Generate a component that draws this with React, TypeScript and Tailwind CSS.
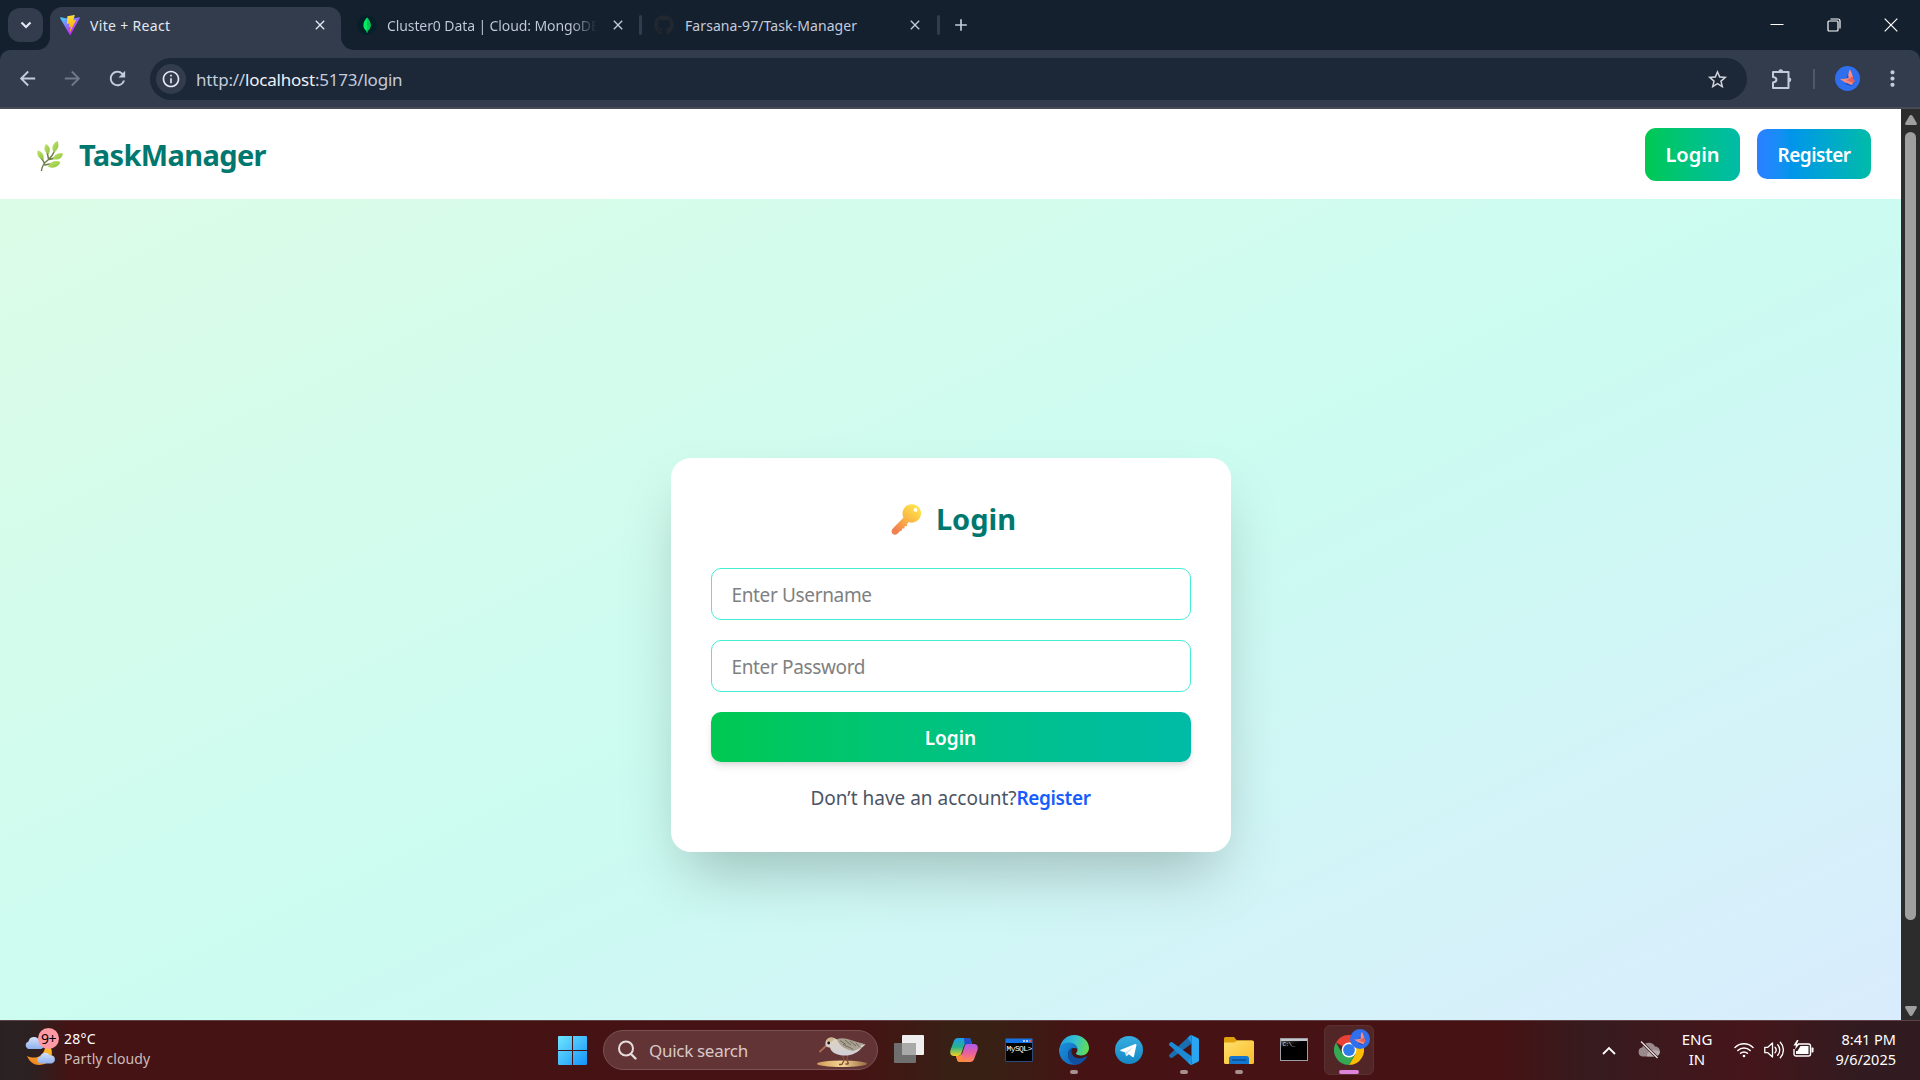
import type { ReactNode } from 'react';
import {
  MdAdd,
  MdArrowBack,
  MdArrowForward,
  MdClose,
  MdInfoOutline,
  MdMoreVert,
  MdRefresh,
  MdStarBorder,
} from 'react-icons/md';
import { FaGithub } from 'react-icons/fa';

/* ---------- browser icons ---------- */

function ViteLogo() {
  return (
    <svg viewBox="0 0 256 257" className="size-5 shrink-0">
      <defs>
        <linearGradient id="viteA" x1="-1%" x2="58%" y1="8%" y2="78%">
          <stop offset="0" stopColor="#41D1FF" />
          <stop offset="1" stopColor="#BD34FE" />
        </linearGradient>
        <linearGradient id="viteB" x1="43%" x2="50%" y1="2%" y2="89%">
          <stop offset="0" stopColor="#FFEA83" />
          <stop offset=".08" stopColor="#FFDD35" />
          <stop offset="1" stopColor="#FFA800" />
        </linearGradient>
      </defs>
      <path fill="url(#viteA)" d="M255.153 37.938L134.897 252.976c-2.483 4.44-8.862 4.466-11.382.048L.875 37.958c-2.746-4.814 1.371-10.646 6.827-9.67l120.385 21.517a6.537 6.537 0 0 0 2.322-.004l117.867-21.483c5.438-.991 9.574 4.796 6.877 9.62Z" />
      <path fill="url(#viteB)" d="M185.432.063L96.44 17.501a3.268 3.268 0 0 0-2.634 3.014l-5.474 92.456a3.268 3.268 0 0 0 3.997 3.378l24.777-5.718c2.318-.535 4.413 1.507 3.936 3.838l-7.361 36.047c-.495 2.426 1.782 4.5 4.151 3.78l15.304-4.649c2.372-.72 4.652 1.36 4.15 3.788l-11.698 56.621c-.732 3.542 3.979 5.473 5.943 2.437l1.313-2.028l72.516-144.72c1.215-2.423-.88-5.186-3.54-4.672l-25.505 4.922c-2.396.462-4.435-1.77-3.759-4.114l16.646-57.705c.677-2.35-1.37-4.583-3.769-4.113Z" />
    </svg>
  );
}

function MongoLogo() {
  return (
    <svg viewBox="0 0 20 20" className="size-5 shrink-0">
      <circle cx="10" cy="10" r="10" fill="#06202a" />
      <path d="M10 2.6C11.5 4.6 13.6 6.6 13.6 10.2c0 2.8-1.5 4.6-3 5.6L10.4 17.6h-.8L9.4 15.8c-1.5-1-3-2.8-3-5.6C6.400 6.6 8.500 4.600 10 2.600Z" fill="#00ed64" />
      <path d="M10 2.600C11.500 4.600 13.600 6.600 13.600 10.200c0 2.800-1.500 4.600-3 5.600L10.400 17.600H10Z" fill="#00c853" />
    </svg>
  );
}

function PuzzleIcon() {
  return (
    <svg viewBox="0 0 24 24" className="size-6" fill="none" stroke="#c3cbdc" strokeWidth="2" strokeLinejoin="round">
      <path d="M3 5h15.500v16H3v-5.500c2.300-.3 3.400-1.400 3.400-2.700S5.300 10.300 3 10z" />
      <path d="M8.500 4.500a2.300 2.300 0 0 1 4.600 0zM19 10.500a2.300 2.300 0 0 1 0 4.600z" fill="#c3cbdc" stroke="none" />
    </svg>
  );
}

function AvatarBird({ className }: { className: string }) {
  return (
    <svg viewBox="0 0 26 26" className={className}>
      <circle cx="13" cy="13" r="13" fill="#2f6fed" />
      <path d="M11 19l6.500 2L20 17l-1-5-6-3z" fill="#1d4fc0" />
      <path d="M15.500 3.500c2 4 3.400 7.500 3.400 11.500l-5-3.500c-.3-3 .5-5.500 1.600-8z" fill="#ff8a80" />
      <path d="M5 13.200c4 .8 7.500 .3 10-1.700l4.500 5-2 3.500c-3.500-2-8.500-3-12.500-6.800z" fill="#f28b82" />
      <path d="M12 15l6-4 2.800 5-2.300 1.500z" fill="#e5605a" />
    </svg>
  );
}

/* ---------- page illustrations ---------- */

function HerbIcon() {
  return (
    <svg viewBox="0 0 26 30" className="mt-[3px] h-[30px] w-[26px] shrink-0">
      <defs>
        <linearGradient id="leaf" x1="0" x2="1" y1="0" y2="1">
          <stop offset="0" stopColor="#c0e56c" />
          <stop offset="1" stopColor="#8fc13f" />
        </linearGradient>
      </defs>
      <path d="M4.500 29.500C5 25 7.500 21.500 11 19c3-2.500 5-5 6.500-9M7.500 22.500C6.500 20 5.500 18.500 3.500 16.500M11.500 18C11 15 10.500 13 10 11M8 24c3-1 5-1 8-1M12 18.500c3-.5 5.500-1.500 8-2.500" fill="none" stroke="#6a7f45" strokeWidth="1.500" strokeLinecap="round" />
      <g fill="url(#leaf)">
        <path d="M.8 9.300c4.200 1.500 6.400 4.700 5.900 9.200C1.700 17.700-.9 13.800.8 9.300z" />
        <path d="M9 3c4 2.200 4.800 6.200 2.600 10.300C7 11 6.300 7 9 3z" />
        <path d="M20.500 0c2 4.500.7 8.700-3.800 11.500C14 7 15.500 2.500 20.500 0z" />
        <path d="M26 12.500c-.6 4.700-4.800 7-10.200 5.700 1.200-4.700 5.500-7 10.200-5.700z" />
        <path d="M23.500 21c-2.200 5.300-7 7-12.500 4.700 2-5 7.200-6.900 12.500-4.700z" />
      </g>
    </svg>
  );
}

function KeyIcon() {
  return (
    <svg viewBox="0 0 32 32" className="size-8 shrink-0">
      <defs>
        <linearGradient id="key" x1="24" x2="6" y1="4" y2="28" gradientUnits="userSpaceOnUse">
          <stop offset="0" stopColor="#ffdf4a" />
          <stop offset=".45" stopColor="#fbb745" />
          <stop offset="1" stopColor="#f08050" />
        </linearGradient>
      </defs>
      <path fillRule="evenodd" fill="url(#key)" d="M22 1.200a9.200 9.200 0 1 1-3.200 17.900l-1.600 1.700-.2 2.200-2.300.2-.3 2.200-2.300.2-.3 2.100-1.700.3-2.400 2.500c-1.600 1.600-3.900 1.600-5.200.3s-1.300-3.600.3-5.200L13.500 14.500A9.200 9.200 0 0 1 22 1.200zM25.500 5a1.900 1.900 0 1 0 0 3.800 1.900 1.900 0 0 0 0-3.800z" />
    </svg>
  );
}

/* ---------- taskbar icons ---------- */

function WeatherIcon() {
  return (
    <svg viewBox="0 0 36 38" className="h-[38px] w-9 shrink-0">
      <defs>
        <linearGradient id="cloud" x1="0" x2="0" y1="0" y2="1">
          <stop offset="0" stopColor="#d3e2fb" />
          <stop offset="1" stopColor="#8fb0ee" />
        </linearGradient>
        <linearGradient id="moon" x1="0" x2="1" y1="1" y2="0">
          <stop offset="0" stopColor="#ee7a1c" />
          <stop offset="1" stopColor="#ffc02e" />
        </linearGradient>
      </defs>
      <path d="M27 18c3 8-1.500 17-12 17-5 0-9.500-3-12-9 8 3.500 16 1.500 18-8z" fill="url(#moon)" />
      <path d="M4 19a4 4 0 0 1 .5-7.500A5.500 5.500 0 0 1 15 10.500a4.300 4.300 0 0 1 2 8.500z" fill="url(#cloud)" />
      <path d="M16 33.500a3.600 3.600 0 0 1 .4-7 5 5 0 0 1 9.300-1.200 4 4 0 0 1 2 8.200z" fill="url(#cloud)" />
    </svg>
  );
}

function WindowsLogo() {
  return (
    <svg viewBox="0 0 29 29" className="size-[29px]">
      <defs>
        <linearGradient id="win" x1="0" x2="29" y1="0" y2="29" gradientUnits="userSpaceOnUse">
          <stop offset="0" stopColor="#6fe6ff" />
          <stop offset="1" stopColor="#1592fb" />
        </linearGradient>
      </defs>
      <path fill="url(#win)" d="M1 0h13v14H0V1a1 1 0 0 1 1-1zM15 0h13a1 1 0 0 1 1 1v13H15zM0 15h14v14H1a1 1 0 0 1-1-1zM15 15h14v13a1 1 0 0 1-1 1H15z" />
    </svg>
  );
}

function SearchGlyph() {
  return (
    <svg viewBox="0 0 20 20" className="-ml-px size-5 shrink-0" fill="none" stroke="#e6dcdc" strokeWidth="2" strokeLinecap="round">
      <circle cx="9" cy="8.500" r="7" />
      <path d="M14 14l4.500 4.500" strokeWidth="2.400" />
    </svg>
  );
}

function Sandpiper() {
  return (
    <svg viewBox="0 0 50 30" className="mt-[3px] h-[30px] w-[50px] shrink-0">
      <defs>
        <linearGradient id="sand" x1="0" x2="1" y1="0" y2="0">
          <stop offset="0" stopColor="#cf9a55" />
          <stop offset=".5" stopColor="#f3d795" />
          <stop offset="1" stopColor="#9a6b41" />
        </linearGradient>
        <linearGradient id="belly" x1="0" x2="0" y1="0" y2="1">
          <stop offset="0" stopColor="#ded3bd" />
          <stop offset="1" stopColor="#cfcfd8" />
        </linearGradient>
      </defs>
      <ellipse cx="25" cy="26.800" rx="25" ry="3.200" fill="url(#sand)" />
      <path d="M25.500 18l1.500 5-2 4.500M31 17l-1 6 1.500 4M25 27.500h-3M31.500 27h-3" fill="none" stroke="#8a4b35" strokeWidth="1.300" />
      <path d="M10 8L3 14.500" stroke="#a86b52" strokeWidth="2" strokeLinecap="round" />
      <path d="M8.500 6c.5-4 3-5.500 6-5.500 3.500 0 5 2 7 3 8-1 13 0 27 4l-4 3.500c-4 5-11 8-18 7.500C18 18 13.500 14 13 10.500 10 10.500 8 9 8.500 6z" fill="url(#belly)" />
      <path d="M20 2c8-2.500 14 1.500 28.500 5.500l-5 1 1 2-8 3.500C29 13 22 9 20 2z" fill="#aaa192" />
      <path d="M23 3.500l6 4M28 3l6 5M33 4l6 5M30 9l6 3.500M26 7l4 3M39 6l3 3.500" stroke="#6b6452" strokeWidth=".9" />
      <path d="M9 4c2-4 6-4 9-2l-4 3z" fill="#d0b68b" />
      <circle cx="11.700" cy="6" r="1.400" fill="#1d1514" />
    </svg>
  );
}

function TaskViewIcon() {
  return (
    <svg viewBox="0 0 30 28" className="-mt-[2px] h-7 w-[30px]">
      <rect x="8" y="0" width="22" height="20" rx="1" fill="#eeeeee" />
      <rect x="0" y="8" width="22" height="20" rx="1" fill="#6f6f6f" />
      <path d="M8 8h14v12H8z" fill="#a9a9a9" />
    </svg>
  );
}

function CopilotIcon() {
  return (
    <svg viewBox="0 0 28 26" className="-mt-px h-[26px] w-7">
      <defs>
        <linearGradient id="copA" x1="0" x2="0" y1="0" y2="1">
          <stop offset="0" stopColor="#1f9be8" />
          <stop offset=".5" stopColor="#25b38e" />
          <stop offset="1" stopColor="#f6d21f" />
        </linearGradient>
        <linearGradient id="copB" x1="0" x2="0" y1="0" y2="1">
          <stop offset="0" stopColor="#a95cf0" />
          <stop offset=".5" stopColor="#ea5f9d" />
          <stop offset="1" stopColor="#ff8a4c" />
        </linearGradient>
      </defs>
      <path d="M8 1h10c2 0 2.600 1 3.200 3l.8 3h-5c-2 0-3 1-3.500 3l-2 6c-.7 2-1.500 3-4 3H4c-3 0-4.500-2-3.500-6L3.500 5C4.300 2.300 5.500 1 8 1z" fill="url(#copA)" />
      <path d="M20 25H10c-2 0-2.600-1-3.200-3L6 19h2c3 0 4-1.500 4.500-3.500l2-6C15 7.500 16 7 18 7h6c3 0 4.500 2 3.500 6l-3 8c-.8 2.700-2 4-4.500 4z" fill="url(#copB)" />
      <path d="M14 1h4c2 0 2.600 1 3.200 3L22 7h-5c-1 0-1.800.3-2.400.9z" fill="#2150c8" />
      <path d="M6 19h2c2 0 3.200-.7 3.900-2L13 25h-3c-2 0-2.600-1-3.200-3z" fill="#fb8a3c" />
    </svg>
  );
}

function MySqlIcon() {
  return (
    <div className="-mt-px flex h-6 w-7 flex-col overflow-hidden rounded-[1px] border border-[#2b4a7c] bg-black">
      <div className="flex h-[4px] shrink-0 items-center justify-end gap-px bg-[#1673e6] pr-px">
        <span className="size-[2px] bg-[#a8ceff]" />
        <span className="size-[2px] bg-[#a8ceff]" />
        <span className="size-[2px] bg-[#ef5b4c]" />
      </div>
      <span className="pl-px font-['Liberation_Mono',monospace] text-[8px] leading-[11px] tracking-[-0.6px] whitespace-nowrap text-white">
        MySQL&gt;
      </span>
    </div>
  );
}

function EdgeIcon() {
  return (
    <svg viewBox="0 0 30 30" className="size-[30px]">
      <defs>
        <linearGradient id="edgeTop" x1="0" x2="1" y1=".3" y2=".5">
          <stop offset="0" stopColor="#1f9fe0" />
          <stop offset=".5" stopColor="#35c1d0" />
          <stop offset="1" stopColor="#62dd50" />
        </linearGradient>
        <linearGradient id="edgeLow" x1="0" x2="1" y1="0" y2="1">
          <stop offset="0" stopColor="#1a94dd" />
          <stop offset="1" stopColor="#0f62b5" />
        </linearGradient>
      </defs>
      <path d="M1 12C2.300 5 8 0 15 0c8.500 0 15 6 15 13 0 4.500-3.500 7.500-7.500 7.500-3.500 0-5.700-1.300-5.500-2.300.2-.8 1.500-1.200 1.500-3.700 0-3-3-6-7.500-6C6.500 8.500 3 10 1 12z" fill="url(#edgeTop)" />
      <path d="M0 15C0 10.500 4.500 7.500 10 7.500c5 0 8.500 3 8.500 7C16 11.500 9 13 9 19.500c0 5 4 9 9 10C8 31.500 0 24.500 0 15z" fill="url(#edgeLow)" />
      <path d="M9 19.500c0-4 2.500-6.500 5-7-1.500 2-2 4-1 6.500 2 4.700 8.500 5.500 14 2.500.8-.4 1.200.2.800.8C25 27 20.500 29.800 17 29.700 12 29 9 24.500 9 19.500z" fill="#10509f" />
    </svg>
  );
}

function TelegramIcon() {
  return (
    <svg viewBox="0 0 28 28" className="-mt-px size-7">
      <defs>
        <linearGradient id="tg" x1="0" x2="0" y1="0" y2="1">
          <stop offset="0" stopColor="#37aee2" />
          <stop offset="1" stopColor="#1587c4" />
        </linearGradient>
      </defs>
      <circle cx="14" cy="14" r="14" fill="url(#tg)" />
      <path d="M5.800 13.700l14.400-5.700c.8-.3 1.400.2 1.200 1.200L19 20.300c-.2.900-.7 1.100-1.500.6l-3.700-2.700-1.900 1.800c-.4.400-.9.200-.9-.3l-.6-3.300-4.500-1.400c-.8-.3-.8-1-.1-1.300z" fill="#fff" />
      <path d="M10.400 16.400l8.300-5.700-6.200 6.300-.6 3-1.100-.6z" fill="#c8daea" />
    </svg>
  );
}

function VsCodeIcon() {
  return (
    <svg viewBox="0 0 100 100" className="size-[30px]">
      <path d="M71 1L76 28 11 76q-3 2-6 0L1 72q-2-3 0-6z" fill="#1a6fb3" />
      <path d="M71 99L76 72 11 24q-3-2-6 0L1 28q-2 3 0 6z" fill="#1c8ad4" />
      <path d="M71 1q2-2 5 0L97 11q3 2 3 5V84q0 3-3 5L76 99q-3 2-5 0 3 0 4-4V5q-1-4-4-4z" fill="#2aa5f2" />
      <path d="M71 1C73 2 75 3 75 6V94c0 3-2 4-4 5L62 90 75 73V27L62 10z" fill="#2297e4" />
    </svg>
  );
}

function FolderIcon() {
  return (
    <svg viewBox="0 0 30 27" className="h-[27px] w-[30px]">
      <defs>
        <linearGradient id="fold" x1="0" x2="1" y1="0" y2="1">
          <stop offset="0" stopColor="#ffdf6c" />
          <stop offset="1" stopColor="#f9bd2a" />
        </linearGradient>
      </defs>
      <path d="M0 1.500A1.500 1.500 0 0 1 1.500 0H10l3 3.500H28V9H0z" fill="#e0a10c" />
      <path d="M0 5.500h10.500L13 3.500h15.500A1.500 1.500 0 0 1 30 5v20.500a1.500 1.500 0 0 1-1.500 1.500h-27A1.500 1.500 0 0 1 0 25.500z" fill="url(#fold)" />
      <path d="M5 27v-5.500A2.500 2.500 0 0 1 7.500 19h15a2.500 2.500 0 0 1 2.500 2.500V27z" fill="#1377d2" />
      <path d="M8.500 23h13" stroke="#0b4c92" strokeWidth="1.300" strokeLinecap="round" />
    </svg>
  );
}

function TerminalIcon() {
  return (
    <div className="-mt-[2px] flex h-[23px] w-7 flex-col border border-[#9b9fa4] bg-black">
      <div className="h-[2px] shrink-0 bg-[#c4c7cb]" />
      <span className="bg-gradient-to-br from-[#555] to-black to-60% pl-[2px] font-['Liberation_Mono',monospace] text-[6px] leading-[8px] tracking-[-0.6px] whitespace-nowrap text-[#dddddd]">
        C:\_
      </span>
    </div>
  );
}

function ChromeIcon() {
  return (
    <svg viewBox="0 0 30 30" className="size-[30px]">
      <path d="M15 15L2 7.500A15 15 0 0 1 28 7.500z" fill="#ea4335" />
      <path d="M15 15V7.500h13A15 15 0 0 1 15 30l6.500-11.200z" fill="#fbbc05" />
      <path d="M15 15l6.500 3.800L15 30A15 15 0 0 1 2 7.500l6.500 11.300z" fill="#34a853" />
      <circle cx="15" cy="15" r="7.400" fill="#fff" />
      <circle cx="15" cy="15" r="5.900" fill="#2f7bea" />
    </svg>
  );
}

function CloudOffIcon() {
  return (
    <svg viewBox="0 0 22 18" className="h-[18px] w-[22px]">
      <path d="M5 15.500a4.500 4.500 0 0 1-.8-8.900A7 7 0 0 1 17 5.500a5 5 0 0 1 0 10z" fill="#9b8a8d" />
      <path d="M9 15.500C9 10 13 8 21.500 10c.5 3-1.500 5.500-4.500 5.500z" fill="#b8abad" />
      <path d="M3 .5L19.500 17" stroke="#3a1a1e" strokeWidth="2.800" />
      <path d="M3 .5L19.500 17" stroke="#efe8e8" strokeWidth="1.300" />
    </svg>
  );
}

function WifiIcon() {
  return (
    <svg viewBox="0 0 20 16" className="h-4 w-5" fill="none" stroke="#fff" strokeWidth="1.500" strokeLinecap="round">
      <path d="M1 5.500a12.800 12.800 0 0 1 18 0M3.800 8.500a8.800 8.800 0 0 1 12.400 0M6.600 11.300a4.800 4.800 0 0 1 6.800 0" />
      <circle cx="10" cy="14" r="1.300" fill="#fff" stroke="none" />
    </svg>
  );
}

function VolumeIcon() {
  return (
    <svg viewBox="0 0 20 18" className="h-[18px] w-5" fill="none" stroke="#fff" strokeWidth="1.300" strokeLinecap="round" strokeLinejoin="round">
      <path d="M.8 6.300h3L8.500 2v14L3.800 11.700h-3z" />
      <path d="M11 6.300a4 4 0 0 1 0 5.400M13.700 3.800a7.600 7.600 0 0 1 0 10.400M16.300 1.300a11.200 11.200 0 0 1 0 15.400" />
    </svg>
  );
}

function BatteryIcon() {
  return (
    <svg viewBox="0 0 21 18" className="-mt-[2px] h-[18px] w-[21px]">
      <path d="M5 4h10.500a2 2 0 0 1 2 2v8a2 2 0 0 1-2 2H3a2 2 0 0 1-2-2V9" fill="none" stroke="#fff" strokeWidth="1.400" />
      <path d="M7.500 6H15.500v8H3v-3h1.500z" fill="#fff" />
      <path d="M18.500 7.500h1.300a.7.700 0 0 1 .7.700v3.600a.7.700 0 0 1-.7.700h-1.300z" fill="#fff" />
      <path d="M4 0L.5 5.500H3L2 9.500 6.500 4H4L5.500 0z" fill="#fff" />
    </svg>
  );
}

/* ---------- browser chrome ---------- */

function Separator() {
  return <span className="h-5 w-[3px] shrink-0 rounded-full bg-[#323c4c]" />;
}

function TabStrip() {
  return (
    <div className="flex h-[50px] bg-[#15202e] text-[14px] text-[#c3cbdc]">
      <button className="mt-2 ml-2 flex h-[34px] w-[35px] shrink-0 items-center justify-center rounded-[12px] bg-[#323c4c]">
        <svg viewBox="0 0 12 8" className="h-2 w-3" fill="none" stroke="#e3e8f2" strokeWidth="2.200">
          <path d="M1.500 1.500L6 6l4.500-4.500" />
        </svg>
      </button>

      <div className="relative mt-[7px] ml-[7px] flex h-[43px] w-[291px] shrink-0 items-start rounded-t-[12px] bg-[#323c4c] pr-[13px] pl-[10px] text-[#e3e8f2]">
        <svg viewBox="0 0 13 13" className="absolute bottom-0 -left-[13px] size-[13px]">
          <path d="M13 0v13H0A13 13 0 0 0 13 0z" fill="#323c4c" />
        </svg>
        <svg viewBox="0 0 13 13" className="absolute -right-[13px] bottom-0 size-[13px]">
          <path d="M0 0v13h13A13 13 0 0 1 0 0z" fill="#323c4c" />
        </svg>
        <div className="flex h-9 grow items-center">
          <ViteLogo />
          <span className="ml-[10px] grow tracking-[0.32px]">Vite + React</span>
          <MdClose className="size-4" />
        </div>
      </div>

      <div className="mt-[7px] flex h-9 w-[301px] shrink-0 items-center pl-4">
        <MongoLogo />
        <span className="ml-[10px] w-[210px] overflow-hidden bg-gradient-to-r from-[#c3cbdc] from-88% to-[#15202e] to-100% bg-clip-text tracking-[-0.1px] whitespace-nowrap text-transparent">
          Cluster0 Data | Cloud: MongoDB
        </span>
        <MdClose className="ml-[13px] size-4 shrink-0" />
        <span className="grow" />
        <Separator />
      </div>

      <div className="mt-[7px] flex h-9 w-[298px] shrink-0 items-center pl-3">
        <FaGithub className="size-5 shrink-0 text-[#22282f]" />
        <span className="ml-[11px] grow tracking-[0.08px] whitespace-nowrap">Farsana-97/Task-Manager</span>
        <MdClose className="mr-[14px] size-4 shrink-0" />
        <Separator />
      </div>

      <div className="mt-[7px] flex h-9 items-center pl-[11px]">
        <MdAdd className="size-5" />
      </div>

      <div className="ml-auto flex h-[49px] items-center gap-[43px] pr-[22px] text-white">
        <svg viewBox="0 0 14 14" className="size-[14px]" stroke="currentColor">
          <path d="M.5 6.500h13" />
        </svg>
        <svg viewBox="0 0 14 14" className="size-[14px]" fill="none" stroke="currentColor" strokeWidth="1.200">
          <rect x="1" y="3" width="10" height="10" rx="1" />
          <path d="M3.500 1H11a2 2 0 0 1 2 2v7.500" />
        </svg>
        <svg viewBox="0 0 14 14" className="size-[14px]" stroke="currentColor" strokeWidth="1.200">
          <path d="M.7.700l12.600 12.600M13.300.700L.7 13.300" />
        </svg>
      </div>
    </div>
  );
}

function Toolbar() {
  return (
    <div className="bg-[#15202e]">
      <div className="flex h-[59px] items-start rounded-t-[10px] border-b-2 border-[#464b56] bg-[#323c4c] pt-2 text-[#c3cbdc]">
        <div className="flex h-[41px] w-[150px] shrink-0 items-center gap-[22px] pl-4">
          <MdArrowBack className="size-[23px]" />
          <MdArrowForward className="size-[23px] text-[#6f7988]" />
          <MdRefresh className="size-[23px]" />
        </div>
        <div className="flex h-[42px] w-[1597px] shrink-0 items-center rounded-full bg-[#1c2737] pr-[18px] pl-[6px]">
          <span className="flex size-[30px] items-center justify-center rounded-full bg-[#323c4c]">
            <MdInfoOutline className="size-5 text-[#e3e8f2]" />
          </span>
          <span className="ml-[10px] grow pt-px text-[17px] tracking-[-0.21px]">
            http://<span className="text-[#eef1f8]">localhost</span>:5173/login
          </span>
          <MdStarBorder className="size-[23px] text-[#cfd2d8]" />
        </div>
        <div className="flex h-[41px] grow items-center">
          <span className="ml-[23px]">
            <PuzzleIcon />
          </span>
          <span className="ml-[19px] h-5 w-[2px] bg-[#4e5868]" />
          <AvatarBird className="ml-[20px] size-[25px]" />
          <MdMoreVert className="ml-[20px] size-[25px]" />
        </div>
      </div>
    </div>
  );
}

/* ---------- page ---------- */

function PageHeader() {
  return (
    <header className="flex h-[90px] shrink-0 items-center justify-between bg-white pr-[30px] pl-[37px]">
      <div className="flex items-center gap-4">
        <HerbIcon />
        <span className="pt-px text-[29px] leading-[40px] font-bold tracking-[-0.63px] text-teal-700">TaskManager</span>
      </div>
      <div className="flex items-center gap-[17px]">
        <button className="h-[53px] w-[95px] rounded-[11px] bg-gradient-to-r from-green-500 to-teal-500 pt-px text-[20px] font-semibold text-white">
          Login
        </button>
        <button className="h-[50px] w-[114px] rounded-[10px] bg-gradient-to-r from-blue-500 to-teal-500 pt-[2px] text-[19px] font-semibold tracking-[-0.48px] text-white">
          Register
        </button>
      </div>
    </header>
  );
}

const inputClass =
  'h-[52px] w-full rounded-[10px] border border-teal-300 px-5 pt-[3px] text-[19px] tracking-[-0.35px] outline-none placeholder:text-[#808080]';

function LoginCard() {
  return (
    <form className="flex w-[560px] flex-col rounded-[20px] bg-white p-10 shadow-[0_31px_62px_-15px_rgba(0,0,0,0.25)]">
      <h2 className="mb-[30px] flex h-10 items-center justify-center gap-[14px] pt-[2px] pl-[5px] text-[29px] font-bold text-teal-700">
        <KeyIcon />
        Login
      </h2>
      <div className="flex flex-col gap-5">
        <input className={inputClass} placeholder="Enter Username" />
        <input className={inputClass} placeholder="Enter Password" type="password" />
        <button
          type="button"
          className="h-[50px] rounded-[10px] bg-gradient-to-r from-green-500 to-teal-500 pt-[3px] text-[19px] font-semibold text-white shadow-[0_5px_8px_-1px_rgba(0,0,0,0.1),0_3px_5px_-2px_rgba(0,0,0,0.1)]"
        >
          Login
        </button>
        <p className="-mb-px pt-px text-center text-[19px] leading-[30px] text-gray-600">
          Don’t have an account?
          <a className="font-semibold tracking-[-0.38px] text-blue-600">Register</a>
        </p>
      </div>
    </form>
  );
}

function Scrollbar() {
  return (
    <div className="flex w-[19px] shrink-0 flex-col items-center bg-[#2c2c2c] pt-[6px] pb-1">
      <svg viewBox="0 0 12 10" className="h-[10px] w-3" fill="#9f9f9f">
        <path d="M6 0q1 0 1.600 1L11.700 8q.6 2-1 2H1.300q-1.600 0-1-2L4.400 1Q5 0 6 0z" />
      </svg>
      <div className="mt-[7px] h-[788px] w-[11px] rounded-full bg-[#9f9f9f]" />
      <span className="grow" />
      <svg viewBox="0 0 12 10" className="h-[10px] w-3" fill="#9f9f9f">
        <path d="M6 10q1 0 1.600-1L11.700 2q.6-2-1-2H1.300Q-.3 0 .3 2l4.100 7q.6 1 1.600 1z" />
      </svg>
    </div>
  );
}

/* ---------- taskbar ---------- */

function TaskCell({ children, open = false }: { children: ReactNode; open?: boolean }) {
  return (
    <div className="relative flex h-[60px] w-[55px] shrink-0 items-center justify-center">
      {children}
      {open && <span className="absolute bottom-[6px] h-1 w-2 rounded-full bg-[#a89090]" />}
    </div>
  );
}

function Taskbar() {
  return (
    <div className="flex h-[60px] items-center bg-[linear-gradient(90deg,#292223_0px,#2c2122_30px,#451313_70px,#461213_850px,#382015_950px,#382015_1000px,#461213_1080px,#461213_1500px,#361b1f_1590px,#45151a_1745px,#331b20_1850px,#301b20_1920px)] text-white shadow-[inset_0_1px_0_#5e4244]">
      <div className="flex w-[545px] shrink-0 items-center pb-[2px] pl-6">
        <div className="relative">
          <WeatherIcon />
          <span className="absolute -top-[2px] left-[14px] flex size-[21px] items-center justify-center rounded-full bg-[#ff99a4] text-[14px] leading-none tracking-[-0.5px] text-black">
            9+
          </span>
        </div>
        <div className="ml-1 text-[14px] leading-5">
          <div className="tracking-[0.25px]">28°C</div>
          <div className="tracking-[0.12px] text-[#cdbcbc]">Partly cloudy</div>
        </div>
      </div>

      <TaskCell>
        <WindowsLogo />
      </TaskCell>
      <div className="mx-[3px] flex h-10 w-[275px] shrink-0 items-center rounded-full border border-[#7b5152] bg-[#623435] pr-[10px] pl-[14px]">
        <SearchGlyph />
        <span className="ml-[12px] grow pt-px text-[17px] tracking-[-0.3px] text-[#d8c9c9]">Quick search</span>
        <Sandpiper />
      </div>
      <TaskCell>
        <TaskViewIcon />
      </TaskCell>
      <TaskCell>
        <CopilotIcon />
      </TaskCell>
      <TaskCell>
        <MySqlIcon />
      </TaskCell>
      <TaskCell open>
        <EdgeIcon />
      </TaskCell>
      <TaskCell>
        <TelegramIcon />
      </TaskCell>
      <TaskCell open>
        <VsCodeIcon />
      </TaskCell>
      <TaskCell open>
        <FolderIcon />
      </TaskCell>
      <TaskCell>
        <TerminalIcon />
      </TaskCell>
      <TaskCell>
        <div className="relative flex size-[50px] items-center justify-center rounded-[6px] border border-[#5c3030] bg-[#522527]">
          <ChromeIcon />
          <AvatarBird className="absolute top-[3px] right-[3px] size-5" />
          <span className="absolute bottom-0 h-1 w-5 rounded-full bg-[#df84db]" />
        </div>
      </TaskCell>

      <div className="ml-auto flex items-center pr-6">
        <svg viewBox="0 0 14 9" className="h-[9px] w-[14px]" fill="none" stroke="#fff" strokeWidth="1.800">
          <path d="M1 8l6-6 6 6" />
        </svg>
        <span className="ml-[22px]">
          <CloudOffIcon />
        </span>
        <div className="ml-[18px] w-[38px] pb-[3px] text-center text-[15px] leading-5">
          <div>ENG</div>
          <div>IN</div>
        </div>
        <span className="ml-[18px]">
          <WifiIcon />
        </span>
        <span className="ml-[10px]">
          <VolumeIcon />
        </span>
        <span className="ml-[9px]">
          <BatteryIcon />
        </span>
        <div className="ml-[21px] w-[61px] pb-[3px] text-right text-[14.5px] leading-5 whitespace-nowrap">
          <div>8:41 PM</div>
          <div>9/6/2025</div>
        </div>
      </div>
    </div>
  );
}

export default function App() {
  return (
    <div className="flex h-[1080px] w-[1920px] flex-col overflow-hidden font-['Noto_Sans','Open_Sans',sans-serif]">
      <TabStrip />
      <Toolbar />
      <div className="flex h-[911px] shrink-0">
        <main className="flex grow flex-col overflow-hidden">
          <PageHeader />
          <section className="flex h-[911px] shrink-0 items-center justify-center bg-gradient-to-br from-green-100 via-teal-100 to-blue-100">
            <LoginCard />
          </section>
        </main>
        <Scrollbar />
      </div>
      <Taskbar />
    </div>
  );
}
